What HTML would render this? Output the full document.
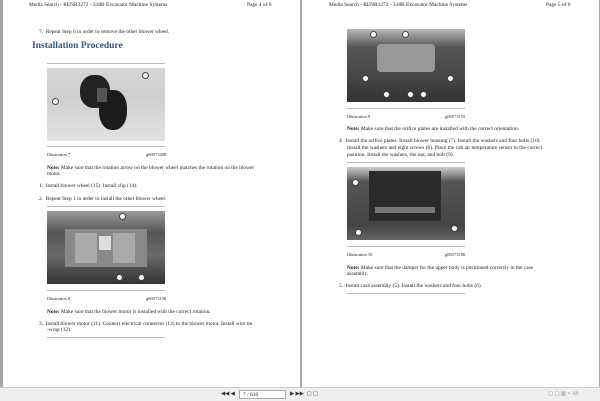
<!DOCTYPE html>
<html><head><meta charset="utf-8"><style>
*{margin:0;padding:0;box-sizing:border-box}
body{width:600px;height:401px;background:#a6a6a6;position:relative;overflow:hidden;font-family:"Liberation Serif",serif;color:#222}
.pg{position:absolute;top:0;width:297px;height:387px;background:#fff}
.t{position:absolute;font-size:5.4px;white-space:nowrap;line-height:6.5px}
.h{position:absolute;font-size:9.5px;font-weight:bold;color:#2a5590;white-space:nowrap}
.ph{position:absolute;width:118px;height:73px}
.ln{position:absolute;width:118px;height:1px;background:#bbb}
.bar{position:absolute;left:0;top:387px;width:600px;height:14px;background:#efefef;border-top:1px solid #ccc}
.c{position:absolute;width:7px;height:7px;border-radius:50%;background:#fff;border:1px solid #444}
</style></head><body>
<div class="pg" style="left:3px">
<div class="t" style="left:26px;top:2px">Media Search - RENR3272 - 318B Excavator Machine Systems</div>
<div class="t" style="left:244px;top:2px">Page 4 of 6</div>
<div class="t" style="left:36px;top:29px">7.&nbsp; Repeat Step 6 in order to remove the other blower wheel.</div>
<div class="h" style="left:29px;top:41px">Installation Procedure</div>
<div class="ln" style="left:44px;top:63px"></div>
<div class="ph" style="left:44px;top:68px;background:linear-gradient(#d6d6d6,#cfcfcf 40%,#e2e2e2)">
<div style="position:absolute;left:33px;top:7px;width:30px;height:33px;border-radius:45%;background:#222"></div>
<div style="position:absolute;left:52px;top:22px;width:28px;height:40px;border-radius:45%;background:#1c1c1c"></div>
<div style="position:absolute;left:50px;top:20px;width:10px;height:14px;background:#555"></div>
<div class="c" style="left:5px;top:30px"></div><div class="c" style="left:95px;top:4px"></div>
</div>
<div class="ln" style="left:44px;top:146px"></div>
<div class="t" style="left:44px;top:152px;font-size:4.5px">Illustration 7</div>
<div class="t" style="left:143px;top:152px;font-size:4.5px">g00573408</div>
<div class="t" style="left:44px;top:165px"><b>Note:</b> Make sure that the rotation arrow on the blower wheel matches the rotation on the blower</div>
<div class="t" style="left:44px;top:171px">motor.</div>
<div class="t" style="left:36px;top:183px">1.&nbsp; Install blower wheel (15). Install clip (14).</div>
<div class="t" style="left:36px;top:196px">2.&nbsp; Repeat Step 1 in order to install the other blower wheel.</div>
<div class="ln" style="left:44px;top:206px"></div>
<div class="ph" style="left:44px;top:211px;background:linear-gradient(#9a9a9a,#555 30%,#6a6a6a 60%,#333)">
<div style="position:absolute;left:18px;top:18px;width:82px;height:38px;background:#888"></div>
<div style="position:absolute;left:28px;top:22px;width:22px;height:30px;background:#aaa"></div>
<div style="position:absolute;left:66px;top:22px;width:22px;height:30px;background:#aaa"></div>
<div style="position:absolute;left:52px;top:25px;width:12px;height:14px;background:#ddd"></div>
<div class="c" style="left:72px;top:2px"></div><div class="c" style="left:91px;top:63px"></div><div class="c" style="left:69px;top:63px;left:69px"></div>
</div>
<div class="ln" style="left:44px;top:290px"></div>
<div class="t" style="left:44px;top:296px;font-size:4.5px">Illustration 8</div>
<div class="t" style="left:143px;top:296px;font-size:4.5px">g00573156</div>
<div class="t" style="left:44px;top:309px"><b>Note:</b> Make sure that the blower motor is installed with the correct rotation.</div>
<div class="t" style="left:36px;top:321px">3.&nbsp; Install blower motor (11). Connect electrical connector (13) to the blower motor. Install wire tie</div>
<div class="t" style="left:44px;top:327px">-wrap (12).</div>
<div class="ln" style="left:44px;top:337px"></div>
</div>
<div class="pg" style="left:302px">
<div class="t" style="left:27px;top:2px">Media Search - RENR3272 - 318B Excavator Machine Systems</div>
<div class="t" style="left:244px;top:2px">Page 5 of 6</div>
<div class="ph" style="left:45px;top:29px;background:linear-gradient(#bbb,#555 25%,#444 70%,#333)">
<div style="position:absolute;left:30px;top:15px;width:58px;height:28px;background:#999;border-radius:4px"></div>
<div class="c" style="left:23px;top:2px"></div><div class="c" style="left:55px;top:2px"></div><div class="c" style="left:15px;top:46px"></div><div class="c" style="left:100px;top:46px"></div><div class="c" style="left:36px;top:62px"></div><div class="c" style="left:60px;top:62px"></div><div class="c" style="left:73px;top:62px"></div>
</div>
<div class="ln" style="left:45px;top:108px"></div>
<div class="t" style="left:45px;top:114px;font-size:4.5px">Illustration 9</div>
<div class="t" style="left:143px;top:114px;font-size:4.5px">g00573155</div>
<div class="t" style="left:45px;top:126px"><b>Note:</b> Make sure that the orifice plates are installed with the correct orientation.</div>
<div class="t" style="left:37px;top:138px">4.&nbsp; Install the orifice plates. Install blower housing (7). Install the washers and four bolts (10).</div>
<div class="t" style="left:45px;top:145px">Install the washers and eight screws (8). Place the cab air temperature sensor in the correct</div>
<div class="t" style="left:45px;top:152px">position. Install the washers, the nut, and bolt (9).</div>
<div class="ln" style="left:45px;top:162px"></div>
<div class="ph" style="left:45px;top:167px;background:linear-gradient(#ccc,#555 20%,#444 80%,#666)">
<div style="position:absolute;left:22px;top:4px;width:72px;height:50px;background:#2a2a2a"></div>
<div style="position:absolute;left:28px;top:40px;width:60px;height:6px;background:#777"></div>
<div class="c" style="left:5px;top:12px"></div><div class="c" style="left:8px;top:62px"></div><div class="c" style="left:104px;top:58px"></div>
</div>
<div class="ln" style="left:45px;top:246px"></div>
<div class="t" style="left:45px;top:252px;font-size:4.5px">Illustration 10</div>
<div class="t" style="left:143px;top:252px;font-size:4.5px">g00573106</div>
<div class="t" style="left:45px;top:265px"><b>Note:</b> Make sure that the damper for the upper body is positioned correctly in the case</div>
<div class="t" style="left:45px;top:271px">assembly.</div>
<div class="t" style="left:37px;top:283px">5.&nbsp; Install case assembly (5). Install the washers and four bolts (6).</div>
<div class="ln" style="left:45px;top:293px"></div>
</div>
<div class="bar">
<div class="t" style="left:221px;top:3px;color:#333">◀◀ ◀</div>
<div style="position:absolute;left:239px;top:2px;width:47px;height:9px;border:1px solid #aaa;background:#fff;font-size:5.5px;padding-left:3px;line-height:8px">7 / 610</div>
<div class="t" style="left:290px;top:3px;color:#333">▶ ▶▶ &nbsp;▢ ▢</div>
<div class="t" style="left:548px;top:3px;color:#888">▢ ▢ <span style="color:#58c">▥</span> ≡ &nbsp;69</div>
</div>
</body></html>
